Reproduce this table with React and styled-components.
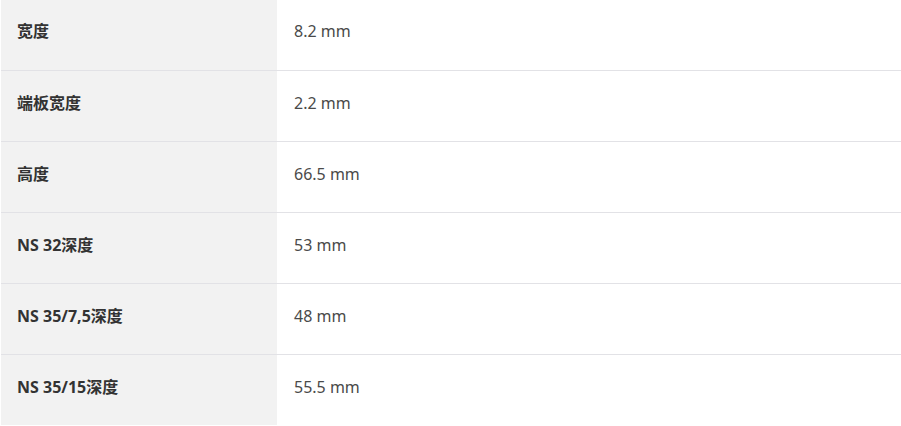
import React from "react";
import styled, { createGlobalStyle } from "styled-components";

const Global = createGlobalStyle`
  html, body { margin: 0; padding: 0; background: #fff; }
  body { font-family: "Noto Sans", "Noto Sans CJK SC", sans-serif; }
`;

const Table = styled.div`
  width: 901px;
  display: grid;
  grid-template-columns: 276px 1fr;
  padding-left: 1px;
  box-sizing: border-box;
`;

const Row = styled.div`
  display: contents;
`;

const Cell = styled.div`
  box-sizing: border-box;
  padding: 20px 16px 0;
  line-height: 24px;
  font-size: 16px;
  font-family: "Noto Sans", "Noto Sans CJK SC", sans-serif;
  border-top: ${(p) => (p.$first ? "none" : "1px solid #e2e2e6")};
  height: ${(p) => (p.$first ? "70px" : "71px")};
  padding-top: ${(p) => (p.$first ? "19px" : "20px")};
`;

const Label = styled(Cell)`
  background: #f2f2f2;
  font-weight: 700;
  color: #333;
`;

const Value = styled(Cell)`
  background: #fff;
  color: #4a4a4a;
  padding-left: 17px;
`;

const rows = [
  ["宽度", "8.2 mm"],
  ["端板宽度", "2.2 mm"],
  ["高度", "66.5 mm"],
  ["NS 32深度", "53 mm"],
  ["NS 35/7,5深度", "48 mm"],
  ["NS 35/15深度", "55.5 mm"],
];

export default function App() {
  return (
    <>
      <Global />
      <Table>
        {rows.map(([k, v], i) => (
          <Row key={k}>
            <Label $first={i === 0}>{k}</Label>
            <Value $first={i === 0}>{v}</Value>
          </Row>
        ))}
      </Table>
    </>
  );
}
